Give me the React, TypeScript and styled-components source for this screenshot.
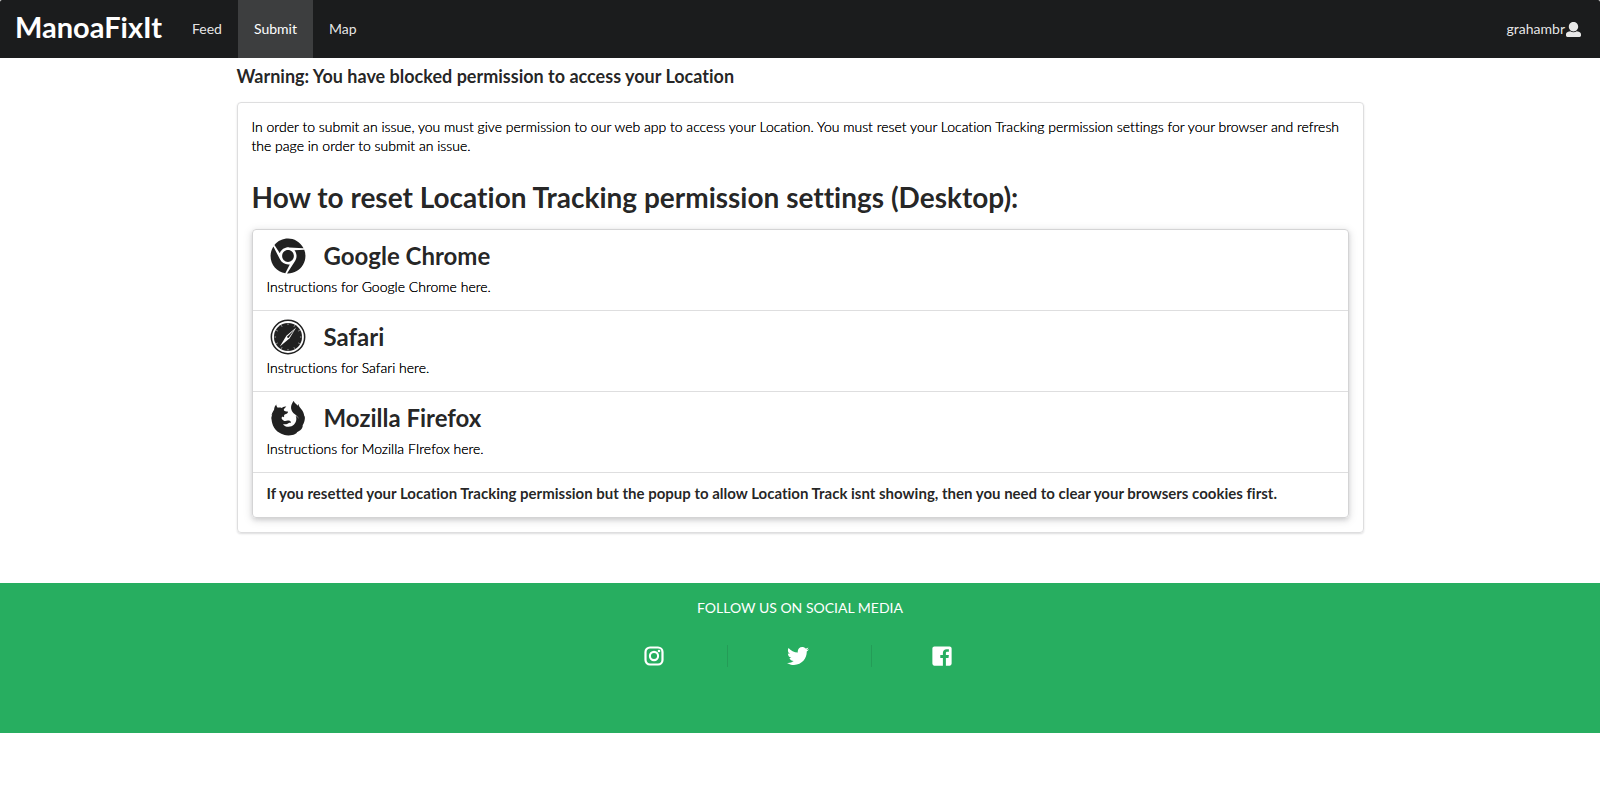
import React from 'react';
import styled, { createGlobalStyle } from 'styled-components';
import { FaTwitter, FaChrome } from 'react-icons/fa';

const GlobalStyle = createGlobalStyle`
  *, *::before, *::after { box-sizing: border-box; }
  body {
    margin: 0;
    background: #fff;
    color: rgba(0, 0, 0, 0.87);
    font-family: Lato, 'Liberation Sans', sans-serif;
    font-size: 14px;
    font-variant-ligatures: none;
    line-height: 20px;
  }
  a { color: inherit; text-decoration: none; }
  h1, h2, h3, p, ul { margin: 0; padding: 0; }
  ul { list-style: none; }
`;

const NavBar = styled.nav`
  display: flex;
  min-height: 58px;
  border-radius: 2px 2px 0 0;
  background: #1b1c1d;
  color: rgba(255, 255, 255, 0.9);
`;

const NavLink = styled.a<{ $active?: boolean }>`
  display: flex;
  align-items: center;
  padding: 0 16px;
  background: ${(p) => (p.$active ? '#3d3e3f' : 'transparent')};
  color: ${(p) => (p.$active ? '#fff' : 'inherit')};
`;

const Brand = styled(NavLink)`
  padding: 0 14px 4px 15px;
  color: #fff;
  font-size: 29px;
  font-weight: 700;
  line-height: 36px;
`;

const UserButton = styled.button`
  display: flex;
  align-items: center;
  gap: 1px;
  margin-left: auto;
  padding: 0 19px;
  border: 0;
  background: transparent;
  color: inherit;
  font: inherit;
`;

const Container = styled.main`
  max-width: 1127px;
  margin: 0 auto 50px;
`;

const Warning = styled.h3`
  padding: 7px 0 14px;
  font-size: 18px;
  font-weight: 700;
  line-height: 23px;
`;

const Panel = styled.section`
  padding: 14px;
  border: 1px solid #dededf;
  border-radius: 4px;
  box-shadow: 0 1px 2px rgba(34, 36, 38, 0.15);
`;

const BodyText = styled.p`
  color: #000;
  font-weight: 300;
  line-height: 19px;
  text-shadow: 0 0 0 #000;
`;

const PanelTitle = styled.h1`
  padding: 24px 0 14px;
  font-size: 28px;
  font-weight: 700;
  line-height: 36px;
`;

const Cards = styled.ul`
  border: 1px solid #d4d4d5;
  border-radius: 4px;
  box-shadow: 0 2px 4px rgba(34, 36, 38, 0.12), 0 2px 10px rgba(34, 36, 38, 0.15);
`;

const Card = styled.li`
  padding: 8px 14px 14px;
  & + & { border-top: 1px solid #dededf; }
`;

const CardTitle = styled.h2`
  display: flex;
  align-items: center;
  gap: 18px;
  padding-left: 3px;
  font-size: 24px;
  font-weight: 700;
  line-height: 36px;
`;

const CardText = styled(BodyText)`
  padding-top: 3px;
`;

const Note = styled.li`
  padding: 11px 14px 14px;
  border-top: 1px solid #dededf;
  font-size: 15px;
  font-weight: 700;
  line-height: 19px;
`;

const Footer = styled.footer`
  min-height: 150px;
  padding-top: 15px;
  background: #27ae60;
  color: #fff;
  text-align: center;
`;

const SocialList = styled.ul`
  display: flex;
  justify-content: center;
  margin-top: 27px;
  padding-right: 2px;
`;

const SocialItem = styled.li`
  display: flex;
  justify-content: center;
  width: 144px;
  height: 22px;
  padding-right: 3px;
  & + & { border-left: 1px solid #249c57; }
`;

const SocialLink = styled.a`
  display: flex;
  align-items: center;
`;

const UserIcon = () => (
  <svg width="15" height="15" viewBox="0 0 512 512" fill="currentColor" aria-hidden="true">
    <path d="M256 0c88.366 0 160 71.634 160 160s-71.634 160-160 160S96 248.366 96 160 167.634 0 256 0zm183.283 333.821l-71.313-17.828c-74.923 53.89-165.738 41.864-223.94 0l-71.313 17.828C29.981 344.505 0 382.903 0 426.955V464c0 26.51 21.49 48 48 48h416c26.51 0 48-21.49 48-48v-37.045c0-44.052-29.981-82.45-72.717-93.134z" />
  </svg>
);

const ticks = Array.from({ length: 12 }, (_, i) => i * 30);

const SafariIcon = () => (
  <svg width="36" height="36" viewBox="0 0 512 512" aria-hidden="true">
    <circle cx="256" cy="256" r="237" fill="none" stroke="currentColor" strokeWidth="22" />
    <circle cx="256" cy="256" r="200" fill="currentColor" />
    {ticks.map((angle) => (
      <path key={angle} d="M256 64v22" stroke="#fff" strokeWidth="8" transform={`rotate(${angle} 256 256)`} />
    ))}
    <path d="M372 121L279 275L140 391L233 237Z" fill="#fff" />
    <path d="M350 148L246 248L266 265Z" fill="currentColor" />
    <circle cx="256" cy="256" r="12" fill="currentColor" />
  </svg>
);

const FirefoxIcon = () => (
  <svg width="36" height="36" viewBox="0 0 480 512" fill="currentColor" aria-hidden="true">
    <path d="M478.1 235.3c-.7-4.5-1.4-7.1-1.4-7.1s-1.8 2-4.7 5.9c-.9-10.7-2.8-21.2-5.8-31.6-3.7-12.9-8.5-25.4-14.5-37.4-3.8-8-8.2-15.6-13.3-22.8-1.8-2.7-3.7-5.4-5.6-7.9-8.8-14.4-19-23.3-30.7-40-7.6-12.8-12.9-26.9-15.4-41.6-3.2 8.9-5.7 18-7.4 27.3-12.1-12.2-22.5-20.7-28.9-26.7C319.4 24.2 323 9.1 323 9.1S264.7 74.2 289.9 142c8.7 23 23.8 43.1 43.4 57.9 24.4 20.2 50.8 36 64.7 76.6-11.2-21.3-28.1-39.2-48.8-51.5 6.2 14.7 9.4 30.6 9.3 46.5 0 61-49.6 110.5-110.6 110.4-8.3 0-16.5-.9-24.5-2.8-9.5-1.8-18.7-4.9-27.4-9.3-12.9-7.8-24-18.1-32.8-30.3l-.2-.3 2 .7c4.6 1.6 9.2 2.8 14 3.7 18.7 4 38.3 1.7 55.6-6.6 17.5-9.7 28-16.9 36.6-14h.2c8.4 2.7 15-5.5 9-14-10.4-13.4-27.4-20-44.2-17-17.5 2.5-33.5 15-56.4 2.9-1.5-.8-2.9-1.6-4.3-2.5-1.6-.9 4.9 1.3 3.4.3-5-2.5-9.8-5.4-14.4-8.6-.3-.3 3.5 1.1 3.1.8-5.9-4-11-9.2-15-15.2-4.1-7.4-4.5-16.4-1-24.1 2.1-3.8 5.4-6.9 9.3-8.7 3 1.5 4.8 2.6 4.8 2.6s-1.3-2.5-2.1-3.8c.3-.1.5 0 .8-.2 2.6 1.1 8.3 4 11.4 5.8 2.1 1.1 3.8 2.7 5.2 4.7 0 0 1-.5.3-2.7-1.1-2.7-2.9-5-5.4-6.6h.2c2.3 1.2 4.5 2.6 6.6 4.1 1.9-4.4 2.8-9.2 2.6-14 .2-2.6-.2-5.3-1.1-7.8-.8-1.6.5-2.2 1.9-.5-.2-1.3-.7-2.5-1.2-3.7v-.1s.8-1.1 1.2-1.5c1-1 2.1-1.9 3.4-2.7 7.2-4.5 14.8-8.4 22.7-11.6 6.4-2.8 11.7-4.9 12.8-5.6 1.6-1 3.1-2.2 4.5-3.5 5.3-4.5 9-10.8 10.2-17.7.1-.9.2-1.8.3-2.8v-1.5c-.9-3.5-6.9-6.1-38.4-9.1-11.1-1.8-20-10.1-22.5-21.1v.1c-.4 1.1-.9 2.3-1.3 3.5.4-1.2.8-2.3 1.3-3.5v-.2c6-15.7 16.8-29.1 30.8-38.3.8-.7-3.2.2-2.4-.5 2.7-1.3 5.4-2.5 8.2-3.5 1.4-.6-6-3.4-12.6-2.7-4 .2-8 1.2-11.7 2.8 1.6-1.3 6.2-3.1 5.1-3.1-8.4 1.6-16.5 4.7-23.9 9 0-.8.1-1.5.5-2.2-5.9 2.5-11 6.5-15 11.5.1-.9.2-1.8.2-2.7-2.7 2-5.2 4.3-7.3 6.9l-.1.1c-17.4-6.7-36.3-8.3-54.6-4.7l-.2-.1h.2c-3.8-3.1-7.1-6.9-9.7-11.1l-.2.1-.4-.2c-1.2-1.8-2.4-3.8-3.7-6-.9-1.6-1.8-3.4-2.7-5.2 0-.1-.1-.2-.2-.2-.4 0-.6 1.7-.9 1.3v-.1c-3.2-8.3-4.7-17.2-4.4-26.2l-.2.1c-5.1 3.5-9 8.6-11.1 14.5-.9 2.1-1.6 3.3-2.2 4.5v-.5c.1-1.1.6-3.3.5-3.1s-.2.3-.3.4c-1.5 1.7-2.9 3.7-3.9 5.8-.9 1.9-1.7 3.9-2.3 5.9-.1.3 0-.3 0-1s.1-2 0-1.7l-.3.7c-6.7 14.9-10.9 30.8-12.4 47.1-.4 2.8-.6 5.6-.5 8.3v.2c-4.8 5.2-9 11-12.7 17.1-12.1 20.4-21.1 42.5-26.8 65.6 4-8.8 8.8-17.2 14.3-25.1C5.5 228.5 0 257.4 0 286.6c1.8-8.6 4.2-17 7-25.3-1.7 34.5 4.9 68.9 19.4 100.3 19.4 43.5 51.6 80 92.3 104.7 16.6 11.2 34.7 19.9 53.8 25.8 2.5.9 5.1 1.8 7.7 2.7-.8-.3-1.6-.7-2.4-1 22.6 6.8 46.2 10.3 69.8 10.3 83.7 0 111.3-31.9 113.8-35 4.1-3.7 7.5-8.2 9.9-13.3 1.6-.7 3.2-1.4 4.9-2.1l1-.5 1.9-.9c12.6-5.9 24.5-13.4 35.3-22.1 16.3-11.7 27.9-28.7 32.9-48.1 3-7.1 3.1-15 .4-22.2.9-1.4 1.7-2.8 2.7-4.3 18-28.9 28.2-61.9 29.6-95.9v-2.8c0-7.3-.6-14.5-1.9-21.6z" />
  </svg>
);

const InstagramIcon = () => (
  <svg width="22" height="22" viewBox="0 0 22 22" fill="none" stroke="currentColor" aria-hidden="true">
    <rect x="2.5" y="2.5" width="17" height="17" rx="4.5" strokeWidth="2.2" />
    <circle cx="11" cy="11" r="4.1" strokeWidth="2.1" />
    <circle cx="16" cy="6" r="1.3" fill="currentColor" stroke="none" />
  </svg>
);

const FacebookIcon = () => (
  <svg width="22" height="22" viewBox="0 0 448 512" fill="currentColor" aria-hidden="true">
    <path d="M448 80v352c0 26.5-21.5 48-48 48h-85.3V302.8h60.6l8.7-67.6h-69.3V192c0-19.6 5.4-32.9 33.5-32.9H384V98.7c-6.2-.8-27.4-2.7-52.2-2.7-51.6 0-87 31.5-87 89.4v49.9H184v67.6h60.9V480H48c-26.5 0-48-21.5-48-48V80c0-26.5 21.5-48 48-48h352c26.5 0 48 21.5 48 48z" />
  </svg>
);

const browsers = [
  { name: 'Google Chrome', icon: <FaChrome size={36} />, text: 'Instructions for Google Chrome here.' },
  { name: 'Safari', icon: <SafariIcon />, text: 'Instructions for Safari here.' },
  { name: 'Mozilla Firefox', icon: <FirefoxIcon />, text: 'Instructions for Mozilla FIrefox here.' },
];

const socials = [
  { name: 'Instagram', icon: <InstagramIcon /> },
  { name: 'Twitter', icon: <FaTwitter size={22} /> },
  { name: 'Facebook', icon: <FacebookIcon /> },
];

export default function App() {
  return (
    <>
      <GlobalStyle />
      <NavBar>
        <Brand href="#home">ManoaFixIt</Brand>
        <NavLink href="#feed">Feed</NavLink>
        <NavLink href="#submit" $active aria-current="page">Submit</NavLink>
        <NavLink href="#map">Map</NavLink>
        <UserButton type="button">
          grahambr
          <UserIcon />
        </UserButton>
      </NavBar>
      <Container>
        <Warning>Warning: You have blocked permission to access your Location</Warning>
        <Panel>
          <BodyText>
            In order to submit an issue, you must give permission to our web app to access your Location. You must
            reset your Location Tracking permission settings for your browser and refresh the page in order to submit
            an issue.
          </BodyText>
          <PanelTitle>How to reset Location Tracking permission settings (Desktop):</PanelTitle>
          <Cards>
            {browsers.map((b) => (
              <Card key={b.name}>
                <CardTitle>
                  {b.icon}
                  {b.name}
                </CardTitle>
                <CardText>{b.text}</CardText>
              </Card>
            ))}
            <Note>
              If you resetted your Location Tracking permission but the popup to allow Location Track isnt showing,
              then you need to clear your browsers cookies first.
            </Note>
          </Cards>
        </Panel>
      </Container>
      <Footer>
        <p>FOLLOW US ON SOCIAL MEDIA</p>
        <SocialList>
          {socials.map((s) => (
            <SocialItem key={s.name}>
              <SocialLink href={`#${s.name.toLowerCase()}`} aria-label={s.name}>{s.icon}</SocialLink>
            </SocialItem>
          ))}
        </SocialList>
      </Footer>
    </>
  );
}
